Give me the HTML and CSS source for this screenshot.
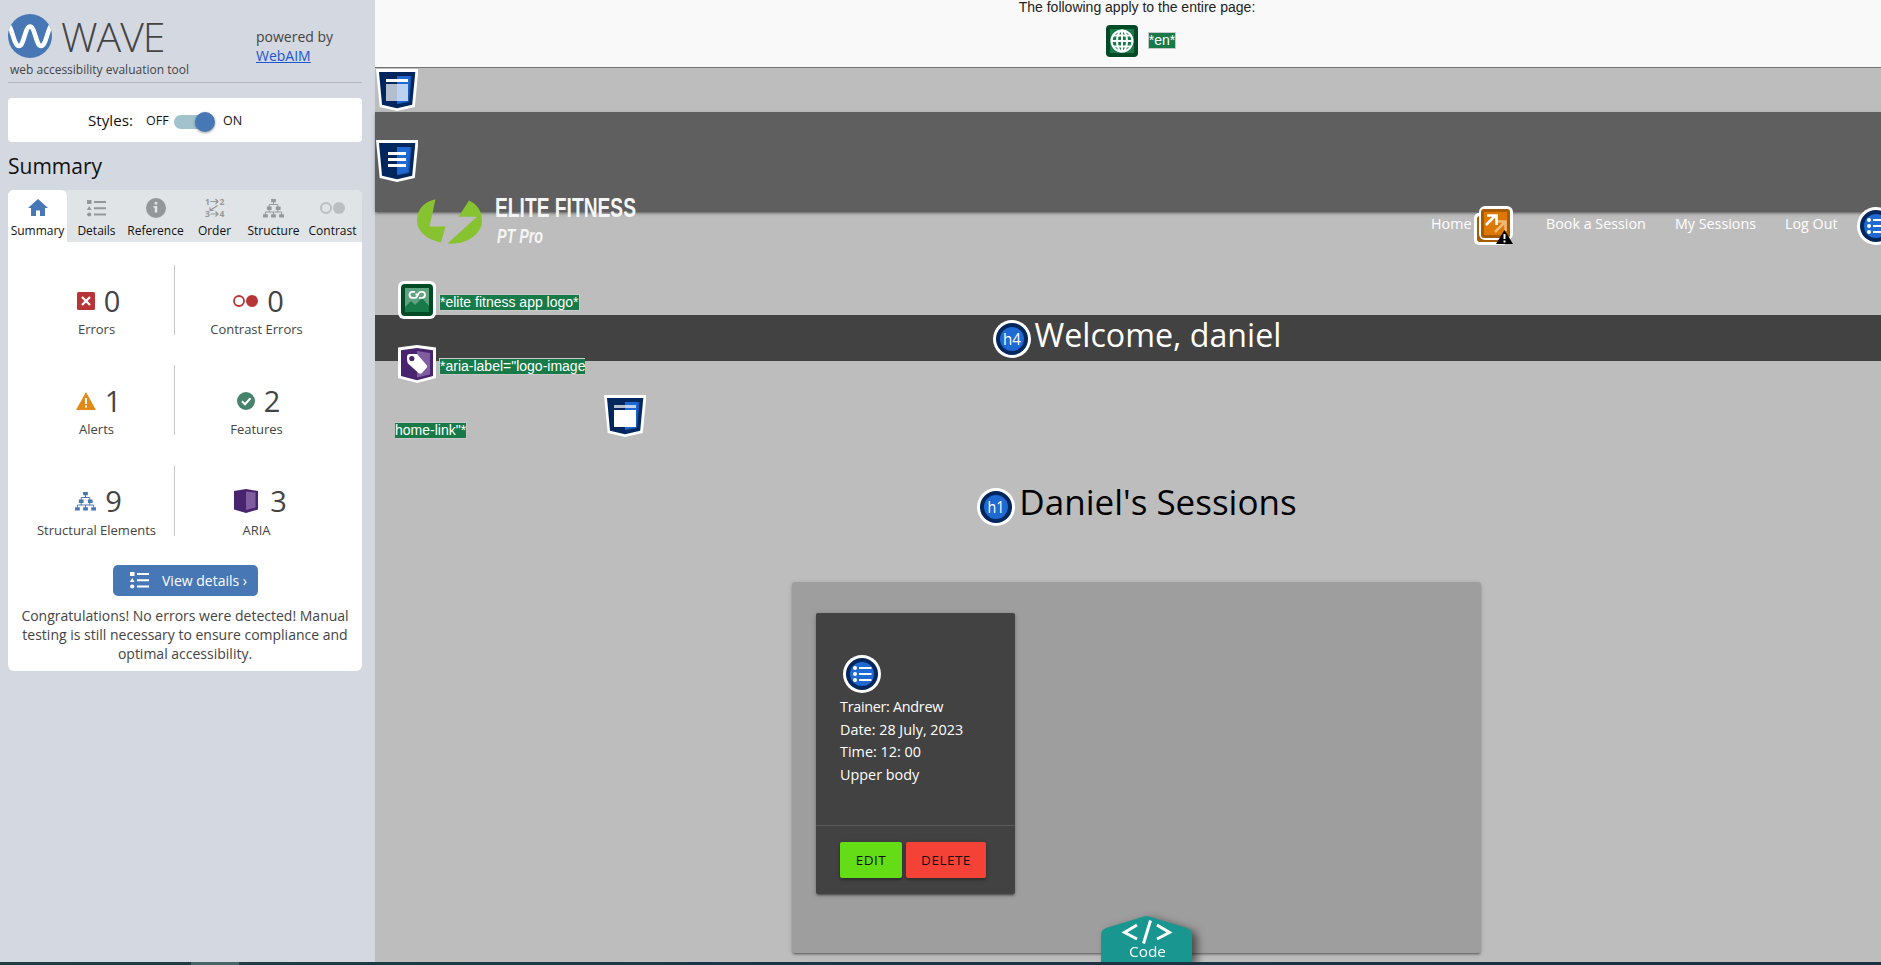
FILE: index.html
```html
<!DOCTYPE html>
<html lang="en">
<head>
<meta charset="utf-8">
<title>WAVE</title>
<link rel="stylesheet" href="styles.css">
</head>
<body>
<svg class="defs" width="0" height="0">
  <defs>
    <symbol id="tree" viewBox="0 0 22 20">
      <path d="M8.500 0h5v3.500h-5zM4 8h5v3.500H4zM13.500 8h5v3.500h-5zM0 16h5v3.500H0zM8.500 16h5v3.500h-5zM17 16h5v3.500h-5z" fill="currentColor"/>
      <path d="M11 3v3M6.500 8.500V5.800h9v2.700M6.500 11v3M15.500 11v3M2.500 16.500v-2.800h17v2.800M11 16.500v-2.800" fill="none" stroke="currentColor"/>
    </symbol>
    <symbol id="list" viewBox="0 0 19 17">
      <path d="M0 0h4.500v4H0zM2.200 6L4.600 10H-.2zM7 1h12v2H7zM7 7.300h12v2H7zM7 13.500h12v2H7z" fill="currentColor"/>
      <circle cx="2.200" cy="14.500" r="2.100" fill="currentColor"/>
    </symbol>
    <symbol id="shield" viewBox="0 0 42 42">
      <path d="M0 0h42.500l-3.700 38L21 42 3.700 38z" fill="#fff"/>
      <path d="M3 3h36.300l-3.100 32.800L21 39.200 6 35.800z" fill="#00265e"/>
      <path d="M21 7h14.500l-2.400 26L21 35.300z" fill="#1b58b4"/>
      <path d="M21 7h12.800l-2.200 25L21 34.500z" fill="#1e69d2"/>
    </symbol>
    <symbol id="ring" viewBox="0 0 38 38">
      <circle cx="19" cy="19" r="19" fill="#fff"/>
      <circle cx="19" cy="19" r="16" fill="#00265e"/>
      <circle cx="19" cy="19" r="12" fill="#1e69d2"/>
    </symbol>
    <symbol id="ringlist" viewBox="0 0 38 38">
      <use href="#ring"/>
      <path d="M16 12h12.500v2H16zM16 18h12.500v2H16zM16 24h12.500v2H16z" fill="#fff"/>
      <circle cx="12" cy="13" r="2" fill="#fff"/><circle cx="12" cy="19" r="2" fill="#fff"/><circle cx="12" cy="25" r="2" fill="#fff"/>
    </symbol>
  </defs>
</svg>
<div class="app">
  <aside class="sidebar">
    <header class="brand">
      <div class="brand-left">
        <div class="brand-row">
          <svg width="44" height="44" viewBox="0 0 44 44">
            <defs><clipPath id="disc"><circle cx="22" cy="22" r="22"/></clipPath></defs>
            <circle cx="22" cy="22" r="22" fill="#4877b6"/>
            <path clip-path="url(#disc)" d="M1 12C4 14 6 32 11 32S17 12.500 22 12.500 28 32 33 32 40 14 43 12" fill="none" stroke="#fff" stroke-width="4.600"/>
          </svg>
          <span class="wordmark">WAVE</span>
        </div>
        <div class="tagline">web accessibility evaluation tool</div>
      </div>
      <div class="powered">powered by<br><a>WebAIM</a></div>
    </header>
    <div class="styles-box">
      <span class="styles-label">Styles:</span><span class="off">OFF</span>
      <span class="switch"><span class="knob"></span></span><span class="on">ON</span>
    </div>
    <h2 class="heading">Summary</h2>
    <section class="card">
      <nav class="tabs">
        <div class="tab active"><svg width="20" height="18" viewBox="0 0 20 18"><path d="M10 0l10 9h-3v8h-5v-5.500H8V17H3V9H0z" fill="#4877b6"/></svg><span>Summary</span></div>
        <div class="tab"><svg width="19" height="17"><use href="#list"/></svg><span>Details</span></div>
        <div class="tab"><svg width="20" height="20" viewBox="0 0 20 20"><circle cx="10" cy="10" r="10" fill="#949799"/><path d="M8.700 4h2.600v2.400H8.700zM7.500 8h3.800v6.500H8.700V9.800H7.500z" fill="#e0e4e7"/></svg><span>Reference</span></div>
        <div class="tab"><svg width="20" height="20" viewBox="0 0 20 20"><g fill="#949799" font-family="Open Sans" font-size="8.500" font-weight="700"><text x="0" y="6.500">1</text><text x="14.500" y="6.500">2</text><text x="0" y="19.300">3</text><text x="14.500" y="19.300">4</text></g><path d="M5.500 3.500h7M10.500 1l2.500 2.500L10.500 6M5.500 16h7M10.500 13.500L13 16l-2.500 2.500M12.500 7.500L5 12.500M5 9.500v3h3.500" fill="none" stroke="#949799" stroke-width="1.200"/></svg><span>Order</span></div>
        <div class="tab"><svg width="21" height="19"><use href="#tree"/></svg><span>Structure</span></div>
        <div class="tab"><svg width="25" height="12" viewBox="0 0 25 12"><circle cx="6" cy="6" r="5" fill="none" stroke="#bcbfc1" stroke-width="2"/><circle cx="19" cy="6" r="6" fill="#bcbfc1"/></svg><span>Contrast</span></div>
      </nav>
      <div class="stats">
        <div class="stat left"><div class="num"><svg width="18" height="18" viewBox="0 0 18 18"><rect width="18" height="18" rx="1.500" fill="#b83537"/><path d="M5 5l8 8M13 5l-8 8" stroke="#fff" stroke-width="2.200"/></svg><b>0</b></div><p>Errors</p></div>
        <div class="stat"><div class="num"><svg width="25" height="12" viewBox="0 0 25 12"><circle cx="6" cy="6" r="5" fill="none" stroke="#b83537" stroke-width="1.800"/><circle cx="19" cy="6" r="6" fill="#b83537"/></svg><b>0</b></div><p>Contrast Errors</p></div>
        <div class="stat left"><div class="num"><svg width="20" height="18" viewBox="0 0 20 18"><path d="M10 0l10 18H0z" fill="#e18b16"/><path d="M9 6h2v6H9zM9 13.500h2v2H9z" fill="#fff"/></svg><b>1</b></div><p>Alerts</p></div>
        <div class="stat"><div class="num"><svg width="18" height="18" viewBox="0 0 18 18"><circle cx="9" cy="9" r="9" fill="#46836a"/><path d="M5 9.200l3 3 5.500-6" fill="none" stroke="#fff" stroke-width="2"/></svg><b>2</b></div><p>Features</p></div>
        <div class="stat left blue"><div class="num"><svg width="21" height="19"><use href="#tree"/></svg><b>9</b></div><p>Structural Elements</p></div>
        <div class="stat"><div class="num aria"><svg width="24" height="24" viewBox="0 0 24 24"><path d="M0 2L12 0l12 2v18.500L12 24 0 20.500z" fill="#48246f"/><path d="M12 2.500l9.500 1v15L12 21z" fill="#7f5d9e"/></svg><b>3</b></div><p>ARIA</p></div>
      </div>
      <div class="button-row"><span class="view-btn"><svg width="19" height="17"><use href="#list"/></svg><span>View details ›</span></span></div>
      <p class="congrats">Congratulations! No errors were detected! Manual<br>testing is still necessary to ensure compliance and<br>optimal accessibility.</p>
    </section>
  </aside>

  <main class="page">
    <div class="page-info">
      <div>The following apply to the entire page:</div>
      <div class="lang">
        <svg width="34" height="34" viewBox="0 0 34 34"><rect width="34" height="34" rx="5" fill="#fff"/><rect x="1" y="1" width="32" height="32" rx="4" fill="#014a25"/><rect x="5" y="5" width="24" height="24" fill="#177a48"/><g fill="none" stroke="#fff" stroke-width="2"><circle cx="17" cy="17" r="10.500"/><ellipse cx="17" cy="17" rx="5" ry="10.500"/><path d="M17 6.500v21M6.500 17h21M8 11.500h18M8 22.500h18"/></g></svg>
        <span class="note">*en*</span>
      </div>
    </div>
    <div class="site-head">
      <div class="navbar">
        <svg class="logo" width="222" height="50" viewBox="0 0 222 50">
          <path d="M18.500 2.200C6 5 0 13 0 23.500 0 34 9 42.500 24 45.500L28.500 29.500H12.500zM52 3.500C60 7 65 14 65 24 65 37 49 48.500 30.500 46.500L60 19.800H41.500z" fill="#87c331"/>
          <g fill="#f5f5f5" font-family="Liberation Sans Narrow, Liberation Sans, sans-serif" font-weight="700">
            <text x="78" y="20" font-size="27" textLength="141" lengthAdjust="spacingAndGlyphs">ELITE FITNESS</text>
            <text x="80" y="46" font-size="20" font-style="italic" textLength="46" lengthAdjust="spacingAndGlyphs">PT Pro</text>
          </g>
        </svg>
        <nav class="links">
          <span>Home</span>
          <svg class="alert" width="39" height="39" viewBox="0 0 39 39"><rect x="0" y="7" width="34" height="32" rx="5" fill="#fff"/><rect x="3" y="10" width="30" height="26" rx="3" fill="#a85a00"/><rect x="5" width="34" height="34" rx="6" fill="#fff"/><rect x="7" y="3" width="29" height="29" rx="3" fill="#a85a00"/><rect x="10" y="6" width="23" height="23" fill="#dd7800"/><path d="M21 26l10-10M22 15.500h9.500V25" fill="none" stroke="#f0b878" stroke-width="2.600"/><path d="M12 19l10-10M13 9.500h9.500V19" fill="none" stroke="#fff" stroke-width="2.600"/><path d="M30.500 24L39 38H22z" fill="#000"/><path d="M29.500 28h2v5h-2zM29.500 34.500h2v2h-2z" fill="#fff"/></svg>
          <span class="book">Book a Session</span><span class="my">My Sessions</span><span class="out">Log Out</span>
          <svg class="end" width="38" height="38"><use href="#ringlist"/></svg>
        </nav>
      </div>
    </div>
    <div class="welcome"><svg width="38" height="38" viewBox="0 0 38 38"><use href="#ring"/><text x="19" y="25" class="ht" textLength="18" lengthAdjust="spacingAndGlyphs">h4</text></svg><span>Welcome, daniel</span></div>
    <h1 class="title"><svg width="38" height="38" viewBox="0 0 38 38"><use href="#ring"/><text x="19" y="25" class="ht" textLength="17" lengthAdjust="spacingAndGlyphs">h1</text></svg><span>Daniel's Sessions</span></h1>
    <section class="sessions">
      <article class="session">
        <div class="session-body">
          <svg width="38" height="38"><use href="#ringlist"/></svg>
          <ul><li class="l1">Trainer: Andrew</li><li>Date: 28 July, 2023</li><li>Time: 12: 00</li><li>Upper body</li></ul>
        </div>
        <div class="actions"><span class="btn edit">EDIT</span><span class="btn delete">DELETE</span></div>
      </article>
    </section>

    <svg class="pin pin-header" width="42" height="42" viewBox="0 0 42 42"><use href="#shield"/><path d="M10 10h22v3H10z" fill="#fff"/><path d="M10 15h22v17H10z" fill="#fff" opacity=".7"/></svg>
    <svg class="pin pin-nav" width="42" height="42" viewBox="0 0 42 42"><use href="#shield"/><path d="M12 12h18v3H12zM12 18h18v3H12zM12 24h18v3H12z" fill="#fff"/></svg>
    <svg class="pin pin-main" width="42" height="42" viewBox="0 0 42 42"><use href="#shield"/><path d="M10 10h22v3H10z" fill="#fff" opacity=".7"/><path d="M10 15h22v17H10z" fill="#fff"/></svg>
    <svg class="pin pin-alt" width="38" height="38" viewBox="0 0 38 38"><rect width="38" height="38" rx="6" fill="#fff"/><rect x="3" y="3" width="32" height="32" rx="4" fill="#014a25"/><rect x="7" y="7" width="24" height="24" fill="#5fa27f"/><path d="M7 26l6-6 4 4 7-7 7 8v6H7z" fill="#177a48"/><path d="M17 10.800h-2.500a3 3 0 0 0 0 6h2.500q2 0 3-3t3-3h1a3 3 0 0 1 0 6h-3M17.500 13.500h2.500" fill="none" stroke="#fff" stroke-width="1.800"/></svg>
    <svg class="pin pin-aria" width="38" height="38" viewBox="0 0 38 38"><path d="M0 2.500L19 0l19 2.500V33l-19 5L0 33z" fill="#fff"/><path d="M3 5.200L19 3l16 2.200V31l-16 4.200L3 31z" fill="#48246f"/><path d="M19 6l13 2v21.500L19 32.500z" fill="#7f5d9e"/><path d="M9 12q0-3 3-3l7 0 10 11.500q1 1.500-1 3l-4 4.500q-2 1.500-3.500 0L10 18.500Q9 17 9 12z" fill="#fff"/><circle cx="13.800" cy="13.500" r="2.600" fill="#48246f"/></svg>
    <span class="note tag-alt">*elite fitness app logo*</span>
    <span class="note tag-aria">*aria-label="logo-image</span>
    <span class="note tag-link">home-link"*</span>
    <div class="code-tab">
      <svg width="91" height="46" viewBox="0 0 91 46"><path d="M0 46V19q0-5 5-7L43 .500q2.500-.8 5 0L86 12q5 2 5 7v27z" fill="#18968f"/><path d="M36 9L23.500 16.500 36 23M56 9l12.500 7.500L56 23M49.500 4.500L42.500 27.500" fill="none" stroke="#fff" stroke-width="3"/><text x="46.500" y="41" class="code-text" textLength="37" lengthAdjust="spacingAndGlyphs">Code</text></svg>
    </div>
  </main>
</div>
<div class="taskbar"><span></span></div>
</body>
</html>
```
FILE: styles.css
```css
* { box-sizing: border-box; }
body { margin: 0; width: 1881px; height: 965px; overflow: hidden; font-family: "Open Sans", sans-serif; color: #444; }
svg { display: block; flex: none; }
.defs { position: absolute; }
p, h1, h2, ul { margin: 0; padding: 0; font-weight: 400; list-style: none; }
.app { display: flex; height: 962px; overflow: hidden; }

.sidebar { width: 375px; flex: none; padding: 0 13px 0 8px; background: #d4d8e0; }
.brand { display: flex; height: 83px; border-bottom: 1px solid #b4b6b8; }
.brand-left { width: 248px; padding-top: 14px; }
.brand-row { display: flex; height: 44px; gap: 9px; }
.wordmark { font-weight: 300; font-size: 41px; line-height: 45px; letter-spacing: -1px; }
.tagline { font-size: 12px; line-height: 16px; margin: 4px 0 0 2px; white-space: nowrap; }
.powered { padding-top: 27px; font-size: 14px; line-height: 19px; white-space: nowrap; }
.powered a { color: #1c56d0; text-decoration: underline; }
.styles-box { display: flex; align-items: center; height: 44px; margin-top: 15px; padding: 0 0 0 80px; background: #fff; border-radius: 4px; color: #111; }
.styles-label { width: 58px; font-size: 15.200px; }
.off, .on { font-size: 12.500px; }
.off { width: 28px; }
.switch { width: 41px; height: 14px; border-radius: 7px; background: linear-gradient(90deg, #a1c3cd 36px, transparent 36px); display: flex; margin-top: 3px; align-items: center; justify-content: flex-end; }
.knob { width: 20px; height: 20px; flex: none; border-radius: 50%; background: #4877b6; box-shadow: 0 1px 3px #0006; }
.on { margin-left: 8px; }
.heading { margin-top: 10px; height: 38px; font-size: 21px; line-height: 28px; color: #111; }
.card { height: 481px; background: #fff; border-radius: 6px; overflow: hidden; }
.tabs { display: flex; height: 52px; background: linear-gradient(90deg, #fff 30px, #e0e4e7 30px); }
.tab { width: 59px; height: 52px; display: grid; grid-template-rows: 36px 16px; justify-items: center; align-items: center; font-size: 12px; line-height: 12px; color: #949799; background: #e0e4e7; }
.tab span { color: #111; white-space: nowrap; height: 18px; }
.tab.active { background: #fff; border-radius: 6px 6px 0 0; }
.stats { display: grid; grid-template-columns: 159px 159px; grid-auto-rows: 70px; row-gap: 30.300px; padding: 23px 0 0 8px; }
.stat { text-align: center; padding-left: 4px; }
.stat.left { border-right: 1px solid #c4c6c8; padding-left: 3px; }
.blue svg { color: #4877b6; }
.num { display: flex; align-items: center; justify-content: center; gap: 9px; height: 52px; padding: 19px 0 0 4px; }
.num.aria { gap: 12px; padding-left: 8px; }
.num b { font-weight: 400; font-size: 29px; line-height: 34px; }
.stat p { font-size: 13px; line-height: 22px; margin-top: 1px; }
.button-row { display: flex; padding: 29px 0 0 105px; }
.view-btn { display: flex; align-items: center; gap: 13px; width: 145px; height: 31px; padding-left: 17px; border-radius: 5px; background: #4877b6; color: #fff; font-size: 14px; white-space: nowrap; }
.congrats { margin-top: 10px; text-align: center; font-size: 14px; line-height: 19px; white-space: nowrap; }

.page { position: relative; width: 1524px; flex: none; background: #bdbdbd; font-family: "Open Sans", sans-serif; }
.page-info { height: 68px; background: #f9f9f9; border-bottom: 1px solid #757575; text-align: center; font: 14px/15px "Liberation Sans", sans-serif; color: #222; }
.lang { display: flex; justify-content: center; align-items: center; gap: 9px; margin: 9px 0 0 7px; }
.lang .note { margin-bottom: 2px; }
.note { display: inline-block; border: 1px solid #c8c8c8; background: #177a48; color: #fff; font: 14px/15px "Liberation Sans", sans-serif; white-space: nowrap; }
.site-head { height: 247px; padding-top: 44px; }
.navbar { display: flex; height: 100px; background: #5f5f5f; box-shadow: 0 2px 2px #0003, 0 3px 1px -2px #0002, 0 1px 5px #0002; }
.logo { margin: 85px 0 0 42px; }
.links { display: flex; align-items: center; height: 39px; margin: 94px 0 0 792px; color: #fff; font-size: 14.300px; white-space: nowrap; }
.links span { width: 43px; line-height: 20px; margin-bottom: 4px; }
.links .book { width: 129px; margin-left: 33px; }
.links .my { width: 110px; }
.links .out { width: 72px; }
.welcome { display: flex; justify-content: center; height: 46px; padding-top: 5px; gap: 4px; background: #424242; color: #fff; font-size: 32.200px; line-height: 30px; }
.title { display: flex; justify-content: center; height: 221px; padding-top: 127px; gap: 4px; color: #000; font-size: 35px; line-height: 28px; }
.ht { font: 15.500px "Open Sans", sans-serif; fill: #fff; text-anchor: middle; }
.sessions { width: 689px; height: 371px; margin-left: 417px; padding: 31px 24px; border-radius: 3px; background: #9e9e9e; box-shadow: 0 2px 2px #0003, 0 3px 1px -2px #0003, 0 1px 5px #0002; }
.session { width: 199px; height: 281px; border-radius: 2px; background: #424242; box-shadow: 0 2px 2px #0003, 0 3px 1px -2px #0003, 0 1px 5px #0003; }
.session-body { height: 213px; padding: 42px 24px 0; border-bottom: 1px solid #5a5a5a; color: #fff; }
.session-body svg { margin-left: 3px; }
.session-body ul { margin-top: 3px; font-size: 14.400px; line-height: 22.600px; white-space: nowrap; }
.l1 { letter-spacing: -.3px; }
.actions { display: flex; gap: 4px; padding: 16px 24px; }
.btn { display: grid; place-items: center; height: 36px; border-radius: 2px; padding-bottom: 1px; font-size: 13.500px; letter-spacing: .5px; color: #111; box-shadow: 0 2px 2px #0003, 0 1px 5px #0003; }
.edit { width: 62px; background: #64dd17; }
.delete { width: 80px; background: #f44336; }

/* Evaluation markers laid over the inspected page */
.pin, .tag-alt, .tag-aria, .tag-link, .code-tab { position: absolute; }
.pin-header { left: 1px; top: 69px; }
.pin-nav { left: 1px; top: 140px; }
.pin-main { left: 229px; top: 395px; }
.pin-alt { left: 23px; top: 281px; }
.pin-aria { left: 23px; top: 345px; }
.tag-alt { left: 64px; top: 294px; }
.tag-aria { left: 64px; top: 358px; border-right: 0; }
.tag-link { left: 20px; top: 422px; border-left: 0; }
.code-tab { left: 726px; top: 916px; filter: drop-shadow(5px 3px 4px #0008); }
.code-text { font: 15px "Open Sans", sans-serif; fill: #fff; text-anchor: middle; }
.taskbar { height: 3px; padding-left: 191px; background: linear-gradient(90deg, #1f3f43, #1c3444 1000px, #1c3040); }
.taskbar span { display: block; width: 48px; height: 3px; background: #4b6468; }
```
